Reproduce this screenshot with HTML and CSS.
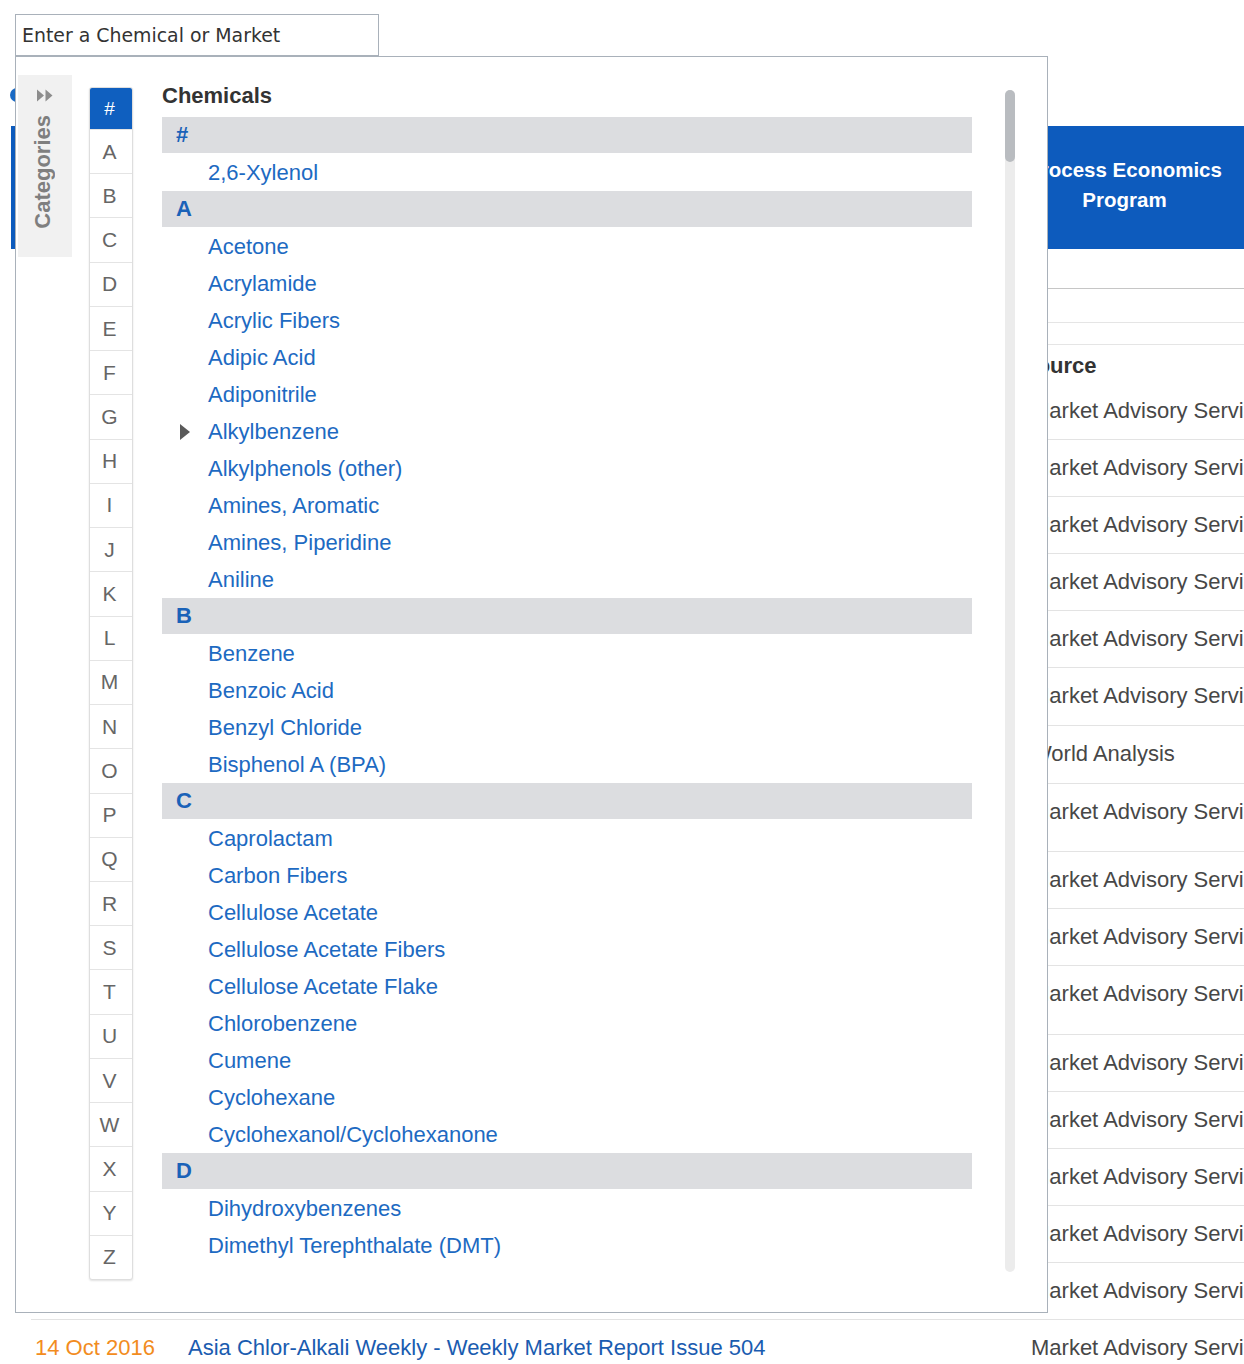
FILE: index.html
```html
<!DOCTYPE html>
<html lang="en">
<head>
<meta charset="utf-8">
<title>Chemical search</title>
<link rel="stylesheet" href="styles.css">
</head>
<body>
<div class="page">
  <div class="search-wrap">
    <input class="search" type="text" placeholder="Enter a Chemical or Market">
    <div class="dropdown">
      <div class="cat-panel">
        <svg class="cat-icon" width="16" height="13" viewBox="0 0 16 13"><path d="M0 0.5 L7 6.5 L0 12.5 Z M8.5 0.5 L15.5 6.5 L8.5 12.5 Z" fill="#8d8d8d"/></svg>
        <span class="cat-label">Categories</span>
      </div>
      <ul class="letters">
        <li class="active">#</li>
        <li>A</li><li>B</li><li>C</li><li>D</li><li>E</li><li>F</li><li>G</li><li>H</li><li>I</li><li>J</li><li>K</li><li>L</li><li>M</li><li>N</li><li>O</li><li>P</li><li>Q</li><li>R</li><li>S</li><li>T</li><li>U</li><li>V</li><li>W</li><li>X</li><li>Y</li><li>Z</li>
      </ul>
      <div class="main">
        <h2 class="main-title">Chemicals</h2>
        <ul class="chem-list">
          <li class="group">#</li>
          <li class="item"><span class="toggle"></span>2,6-Xylenol</li>
          <li class="group">A</li>
          <li class="item"><span class="toggle"></span>Acetone</li>
          <li class="item"><span class="toggle"></span>Acrylamide</li>
          <li class="item"><span class="toggle"></span>Acrylic Fibers</li>
          <li class="item"><span class="toggle"></span>Adipic Acid</li>
          <li class="item"><span class="toggle"></span>Adiponitrile</li>
          <li class="item"><span class="toggle"><span class="caret"></span></span>Alkylbenzene</li>
          <li class="item"><span class="toggle"></span>Alkylphenols (other)</li>
          <li class="item"><span class="toggle"></span>Amines, Aromatic</li>
          <li class="item"><span class="toggle"></span>Amines, Piperidine</li>
          <li class="item"><span class="toggle"></span>Aniline</li>
          <li class="group">B</li>
          <li class="item"><span class="toggle"></span>Benzene</li>
          <li class="item"><span class="toggle"></span>Benzoic Acid</li>
          <li class="item"><span class="toggle"></span>Benzyl Chloride</li>
          <li class="item"><span class="toggle"></span>Bisphenol A (BPA)</li>
          <li class="group">C</li>
          <li class="item"><span class="toggle"></span>Caprolactam</li>
          <li class="item"><span class="toggle"></span>Carbon Fibers</li>
          <li class="item"><span class="toggle"></span>Cellulose Acetate</li>
          <li class="item"><span class="toggle"></span>Cellulose Acetate Fibers</li>
          <li class="item"><span class="toggle"></span>Cellulose Acetate Flake</li>
          <li class="item"><span class="toggle"></span>Chlorobenzene</li>
          <li class="item"><span class="toggle"></span>Cumene</li>
          <li class="item"><span class="toggle"></span>Cyclohexane</li>
          <li class="item"><span class="toggle"></span>Cyclohexanol/Cyclohexanone</li>
          <li class="group">D</li>
          <li class="item"><span class="toggle"></span>Dihydroxybenzenes</li>
          <li class="item"><span class="toggle"></span>Dimethyl Terephthalate (DMT)</li>
        </ul>
      </div>
      <div class="scrollbar"><div class="thumb"></div></div>
    </div>
  </div>

  <div class="tabs"><span class="tab-dot"></span></div>

  <div class="tiles">
    <div class="tile"></div>
    <div class="tile"></div>
    <div class="tile"></div>
    <div class="tile"></div>
    <div class="tile">Process Economics Program</div>
  </div>

  <div class="rule rule-dark"></div>
  <div class="rule rule-mid"></div>
  <div class="rule rule-low"></div>

  <table class="results">
    <colgroup><col class="c-date"><col class="c-title"><col class="c-source"></colgroup>
    <thead>
      <tr><th></th><th></th><th class="th-source">Source</th></tr>
    </thead>
    <tbody>
      <tr><td class="date"></td><td class="title"></td><td>Market Advisory Service</td></tr>
      <tr><td class="date"></td><td class="title"></td><td>Market Advisory Service</td></tr>
      <tr><td class="date"></td><td class="title"></td><td>Market Advisory Service</td></tr>
      <tr><td class="date"></td><td class="title"></td><td>Market Advisory Service</td></tr>
      <tr><td class="date"></td><td class="title"></td><td>Market Advisory Service</td></tr>
      <tr class="row-plus1"><td class="date"></td><td class="title"></td><td>Market Advisory Service</td></tr>
      <tr class="row-plus1"><td class="date"></td><td class="title"></td><td>World Analysis</td></tr>
      <tr class="row-tall"><td class="date"></td><td class="title"></td><td>Market Advisory Service</td></tr>
      <tr><td class="date"></td><td class="title"></td><td>Market Advisory Service</td></tr>
      <tr><td class="date"></td><td class="title"></td><td>Market Advisory Service</td></tr>
      <tr class="row-taller"><td class="date"></td><td class="title"></td><td>Market Advisory Service</td></tr>
      <tr><td class="date"></td><td class="title"></td><td>Market Advisory Service</td></tr>
      <tr><td class="date"></td><td class="title"></td><td>Market Advisory Service</td></tr>
      <tr><td class="date"></td><td class="title"></td><td>Market Advisory Service</td></tr>
      <tr><td class="date"></td><td class="title"></td><td>Market Advisory Service</td></tr>
      <tr><td class="date"></td><td class="title"></td><td>Market Advisory Service</td></tr>
      <tr><td class="date">14 Oct 2016</td><td class="title">Asia Chlor-Alkali Weekly - Weekly Market Report Issue 504</td><td>Market Advisory Service</td></tr>
    </tbody>
  </table>
</div>
</body>
</html>
```

FILE: styles.css
```css
html, body {
  margin: 0;
  padding: 0;
  background: #ffffff;
  overflow: hidden;
  font-family: "Liberation Sans", Arial, Helvetica, sans-serif;
}

.page {
  position: relative;
  width: 1244px;
  height: 1364px;
  padding-top: 14px;
  box-sizing: border-box;
  overflow: hidden;
}

/* search input */
.search-wrap {
  position: relative;
  margin-left: 15px;
  width: 364px;
  height: 42px;
}

.search {
  display: block;
  box-sizing: border-box;
  width: 364px;
  height: 42px;
  margin: 0;
  border: 1px solid #a9b1ba;
  border-radius: 0;
  padding: 0 6px;
  font-family: "DejaVu Sans", "Liberation Sans", sans-serif;
  font-size: 18.9px;
  color: #333;
  outline: none;
  background: #fff;
}

.search::placeholder {
  color: #333;
  opacity: 1;
}

/* dropdown */
.dropdown {
  position: absolute;
  left: 0;
  top: 42px;
  z-index: 10;
  width: 1033px;
  height: 1257px;
  box-sizing: border-box;
  border: 1px solid #a9b1ba;
  background: #ffffff;
  display: flex;
  align-items: flex-start;
}

.cat-panel {
  margin-left: 2px;
  margin-top: 18px;
  width: 54px;
  height: 182px;
  box-sizing: border-box;
  padding-top: 14px;
  background: #f1f1f1;
  display: flex;
  flex-direction: column;
  align-items: center;
}

.cat-icon {
  display: block;
  flex: none;
}

.cat-label {
  margin-top: 13px;
  margin-right: 4px;
  writing-mode: vertical-rl;
  transform: rotate(180deg);
  font-weight: bold;
  font-size: 22px;
  line-height: 22px;
  color: #7f7f7f;
  white-space: nowrap;
}

.letters {
  list-style: none;
  margin: 30px 0 0 17px;
  padding: 0;
  width: 44px;
  box-sizing: border-box;
  border: 1px solid #dedede;
  border-radius: 3px;
  box-shadow: 0 1px 2px rgba(0, 0, 0, 0.12);
  background: #fff;
  overflow: hidden;
}

.letters li {
  height: 44.24px;
  box-sizing: border-box;
  border-top: 1px solid #e4e4e4;
  display: flex;
  align-items: center;
  justify-content: center;
  padding-right: 3px;
  font-size: 21px;
  color: #666;
}

.letters li.active {
  height: 41px;
  border-top: none;
  background: #0f5fbf;
  color: #ffffff;
  font-size: 19px;
}

.main {
  margin-left: 29px;
  width: 810px;
  height: 1207px;
  box-sizing: border-box;
  padding-top: 26px;
  overflow: hidden;
}

.main-title {
  margin: 0 0 8px 0;
  font-size: 22px;
  line-height: 26px;
  font-weight: bold;
  color: #333;
}

.chem-list {
  list-style: none;
  margin: 0;
  padding: 0;
}

.chem-list .group {
  height: 36px;
  margin-bottom: 1px;
  padding-left: 14px;
  background: #dcdde0;
  font-weight: bold;
  font-size: 22px;
  line-height: 36px;
  color: #1a62b8;
}

.chem-list .item {
  height: 37px;
  display: flex;
  align-items: center;
  padding-left: 18px;
  font-size: 22px;
  line-height: 37px;
  color: #1d6ac2;
  white-space: nowrap;
}

.toggle {
  width: 28px;
  flex: none;
  display: flex;
  align-items: center;
}

.caret {
  width: 0;
  height: 0;
  border-left: 10px solid #5a5a5a;
  border-top: 8px solid transparent;
  border-bottom: 8px solid transparent;
}

.scrollbar {
  margin-left: 33px;
  margin-top: 33px;
  width: 10px;
  height: 1182px;
  border-radius: 5px;
  background: #ececec;
  flex: none;
}

.thumb {
  height: 72px;
  border-radius: 5px;
  background: #b9bcc0;
}

/* page behind the dropdown */
.tabs {
  height: 70px;
  box-sizing: border-box;
  padding-top: 32px;
}

.tab-dot {
  display: block;
  margin-left: 10px;
  width: 14px;
  height: 14px;
  border-radius: 50%;
  background: #1a6ac4;
}

.tiles {
  display: flex;
  gap: 5px;
  margin-left: 11px;
}

.tile {
  flex: 0 0 243px;
  height: 123px;
  box-sizing: border-box;
  padding: 0 12px 5px;
  background: #0d5bbd;
  color: #ffffff;
  font-weight: bold;
  font-size: 20.5px;
  line-height: 30px;
  text-align: center;
  display: flex;
  align-items: center;
  justify-content: center;
}

.rule {
  margin-left: 20px;
}

.rule-dark {
  height: 39px;
  border-bottom: 1px solid #c6c6c6;
}

.rule-mid {
  height: 33px;
  border-bottom: 1px solid #e5e5e5;
}

.rule-low {
  height: 21px;
  border-bottom: 1px solid #e5e5e5;
}

.results {
  margin-left: 31px;
  width: 1400px;
  table-layout: fixed;
  border-collapse: collapse;
  font-size: 22px;
  color: #474747;
}

.c-date { width: 156px; }
.c-title { width: 843px; }
.c-source { width: 401px; }

.results th {
  text-align: left;
  font-weight: bold;
  color: #333;
  padding: 8px 0 4px;
  line-height: 26px;
  height: 26px;
}

.results th.th-source {
  text-indent: -8px;
}

.results td.date {
  padding-left: 4px;
}

.results td {
  padding-top: 15px;
  padding-bottom: 15px;
  line-height: 26px;
  height: 26px;
  border-bottom: 1px solid #e3e3e3;
  vertical-align: top;
  white-space: nowrap;
  overflow: hidden;
}

.results td.date {
  color: #f28c1e;
}

.results td.title {
  color: #1a5cb0;
}

.results tr.row-plus1 td { padding-bottom: 16px; }
.results tr.row-tall td { padding-bottom: 26px; }
.results tr.row-taller td { padding-bottom: 27px; }
```
